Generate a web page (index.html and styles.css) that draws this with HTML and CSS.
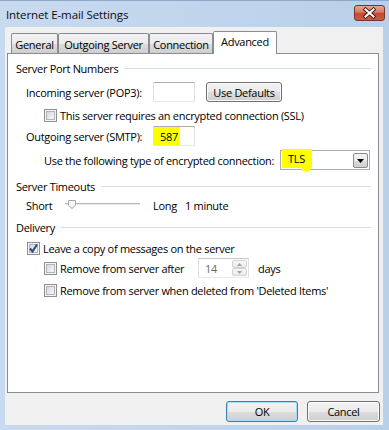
FILE: index.html
```html
<!DOCTYPE html>
<html lang="en">
<head>
    <meta charset="UTF-8">
    <title>Internet E-mail Settings</title>
    <link rel="stylesheet" href="styles.css">
</head>
<body>
    <div class="window">
        <div class="titlebar">
            <span class="title">Internet E-mail Settings</span>
            <span class="close-btn">
                <svg width="31" height="16" viewBox="0 0 31 16">
                    <path d="M11.5 4.5 L19.5 11.5 M19.5 4.5 L11.5 11.5" stroke="#4a1d16" stroke-width="4" stroke-linecap="square"/>
                    <path d="M11.5 4.5 L19.5 11.5 M19.5 4.5 L11.5 11.5" stroke="#ffffff" stroke-width="2" stroke-linecap="square"/>
                </svg>
            </span>
        </div>

        <div class="client">
            <div class="tabs">
                <div class="tab tab-general">General</div>
                <div class="tab tab-outgoing">Outgoing Server</div>
                <div class="tab tab-connection">Connection</div>
                <div class="tab tab-advanced active">Advanced</div>
            </div>

            <div class="panel">
                <div class="group-title"><span>Server Port Numbers</span></div>

                <div class="row row-incoming indent1">
                    <span class="field-label">Incoming server (POP3):</span>
                    <span class="textbox port-box"></span>
                    <button class="button defaults-btn">Use Defaults</button>
                </div>

                <div class="row row-ssl indent2">
                    <span class="check"></span>
                    <span>This server requires an encrypted connection (SSL)</span>
                </div>

                <div class="row row-outgoing indent1">
                    <span class="field-label">Outgoing server (SMTP):</span>
                    <span class="textbox port-box"><span class="marker port-marker">587</span></span>
                </div>

                <div class="row row-encrypt indent2">
                    <span class="encrypt-label">Use the following type of encrypted connection:</span>
                    <span class="combo">
                        <span class="marker tls-marker">TLS</span>
                        <span class="combo-fill"></span>
                        <span class="combo-btn">
                            <svg width="7" height="4" viewBox="0 0 7 4"><path d="M0 0 H7 L3.5 4 Z" fill="#000"/></svg>
                        </span>
                    </span>
                </div>

                <div class="group-title group-timeouts"><span>Server Timeouts</span></div>

                <div class="row row-slider indent1">
                    <span class="short-label">Short</span>
                    <span class="slider">
                        <svg width="93" height="20" viewBox="0 0 93 20">
                            <rect x="5" y="8" width="75" height="1" fill="#b9b9b9"/>
                            <rect x="5" y="9" width="75" height="1" fill="#e6e6e6"/>
                            <path d="M8.5 5.5 H15.5 V10.5 L12 13.5 L8.5 10.5 Z" fill="#f6f6f6" stroke="#a8a8a8"/>
                        </svg>
                    </span>
                    <span class="long-label">Long</span>
                    <span>1 minute</span>
                </div>

                <div class="group-title group-delivery"><span>Delivery</span></div>

                <div class="row row-leave indent-check">
                    <span class="check checked">
                        <svg width="11" height="11" viewBox="0 0 11 11">
                            <path d="M2 5.5 L4.5 8.5 L9 1.5" fill="none" stroke="#2a4a8a" stroke-width="2"/>
                        </svg>
                    </span>
                    <span>Leave a copy of messages on the server</span>
                </div>

                <div class="row row-remove-after indent2">
                    <span class="check"></span>
                    <span class="remove-label">Remove from server after</span>
                    <span class="spinner">
                        <span class="spinner-value">14</span>
                        <span class="spin-btns">
                            <span class="spin-btn">
                                <svg width="5" height="3" viewBox="0 0 5 3"><path d="M0 3 L2.5 0 L5 3 Z" fill="#a2a2a2"/></svg>
                            </span>
                            <span class="spin-btn">
                                <svg width="5" height="3" viewBox="0 0 5 3"><path d="M0 0 H5 L2.5 3 Z" fill="#a2a2a2"/></svg>
                            </span>
                        </span>
                    </span>
                    <span class="days-label">days</span>
                </div>

                <div class="row row-remove-deleted indent2">
                    <span class="check"></span>
                    <span>Remove from server when deleted from 'Deleted Items'</span>
                </div>
            </div>

            <div class="dialog-buttons">
                <button class="button ok-btn">OK</button>
                <button class="button cancel-btn">Cancel</button>
            </div>
        </div>
    </div>
</body>
</html>
```

FILE: styles.css
```css
/* Base */
* {
    margin: 0;
    padding: 0;
    box-sizing: border-box;
}

body {
    font-family: "Open Sans", "Segoe UI", sans-serif;
    font-size: 11px;
    letter-spacing: -0.3px;
    white-space: nowrap;
    color: #000000;
    background: #ffffff;
}

button {
    font: inherit;
    letter-spacing: inherit;
    color: inherit;
}

/* Window frame */
.window {
    width: 389px;
    height: 430px;
    display: flex;
    flex-direction: column;
    background: linear-gradient(to right, #c8daf0, #b9d0ea);
    border-top: 1px solid #8fa8c7;
}

.titlebar {
    height: 26px;
    display: flex;
    justify-content: space-between;
    align-items: flex-start;
    padding: 0 4px 0 6px;
}

.title {
    margin-top: 6px;
    font-size: 11.5px;
    letter-spacing: -0.1px;
    line-height: 16px;
    color: #0c0c0c;
}

.close-btn {
    margin-top: 4px;
    width: 31px;
    height: 16px;
    border: 1px solid #7a3328;
    border-radius: 3px;
    background: linear-gradient(#e5a596 0%, #d77a67 45%, #c44a34 50%, #cc5a43 100%);
    display: flex;
    align-items: center;
    justify-content: center;
}

.close-btn svg {
    margin: -1px;
}

.client {
    flex: 1;
    margin: 0 6px 5px 5px;
    background: #f0f0f0;
    padding: 4px 4px 0 2px;
    display: flex;
    flex-direction: column;
}

/* Tabs */
.tabs {
    display: flex;
    align-items: flex-end;
    height: 22px;
    padding-left: 4px;
    position: relative;
    z-index: 1;
}

.tab {
    height: 20px;
    border: 1px solid #898c95;
    border-bottom: none;
    border-radius: 2px 2px 0 0;
    background: linear-gradient(#f2f2f2 0%, #ebebeb 50%, #dddddd 51%, #cfcfcf 100%);
    display: flex;
    align-items: center;
    justify-content: center;
    padding-top: 1px;
}

.tab-general { width: 47px; }
.tab-outgoing { width: 91px; }
.tab-connection { width: 64px; }

.tab.active {
    width: 64px;
    height: 23px;
    margin-bottom: -1px;
    padding: 0 0 3px;
    background: #ffffff;
}

/* Tab page */
.panel {
    height: 340px;
    background: #ffffff;
    border: 1px solid #898c95;
    padding: 5px 7px 0 8px;
}

.group-title {
    display: flex;
    align-items: center;
    height: 18px;
}

.group-title::after {
    content: "";
    flex: 1;
    height: 1px;
    margin-left: 6px;
    background: #d5dfe5;
}

.row {
    display: flex;
    align-items: center;
    height: 20px;
}

.indent1 { padding-left: 10px; }
.indent2 { padding-left: 28px; }
.indent-check { padding-left: 11px; }

.row-incoming { margin-top: 5px; }
.row-ssl { margin-top: 3px; }
.row-outgoing { margin-top: 1px; }
.row-encrypt { margin-top: 4px; }
.group-timeouts { margin-top: 7px; }
.group-delivery { margin-top: 3px; }
.row-leave { margin-top: 2px; }
.row-remove-deleted { margin-top: 2px; }

.field-label {
    width: 127px;
}

.textbox {
    height: 20px;
    background: #ffffff;
    border: 1px solid;
    border-color: #abadb3 #dbdfe6 #e3e9ef #e2e3ea;
}

.port-box {
    width: 42px;
    display: flex;
    align-items: stretch;
}

.marker {
    background: #ffff00;
}

.port-marker {
    width: 26px;
    padding-left: 6px;
    display: flex;
    align-items: center;
}

/* Buttons */
.button {
    height: 20px;
    border: 1px solid #707070;
    border-radius: 3px;
    background: linear-gradient(#f2f2f2 0%, #ebebeb 50%, #dddddd 51%, #cfcfcf 100%);
    box-shadow: inset 0 0 0 1px #fbfbfb;
    cursor: default;
}

.defaults-btn {
    width: 76px;
    margin-left: 11px;
}

/* Checkboxes */
.check {
    width: 13px;
    height: 13px;
    margin-right: 3px;
    border: 1px solid #8e8f8f;
    background: linear-gradient(135deg, #c9cdd3 0%, #eceef0 60%, #f8f8f8 100%);
    box-shadow: inset 0 0 0 1px #f4f4f4, inset 0 0 0 2px #b2b6bc;
    flex-shrink: 0;
    display: flex;
}

/* Combo box */
.encrypt-label {
    width: 236px;
}

.combo {
    width: 90px;
    height: 20px;
    border: 1px solid #abadb3;
    background: #ffffff;
    display: flex;
    align-items: flex-start;
    padding: 0 1px;
}

.tls-marker {
    position: relative;
    width: 30px;
    height: 19px;
    margin-top: -2px;
    padding: 2px 0 0 6px;
    line-height: 16px;
}

.tls-marker::after {
    content: "";
    position: absolute;
    right: 0;
    bottom: -4px;
    width: 11px;
    height: 6px;
    background: #ffff00;
    border-radius: 0 0 6px 5px;
}

.combo-fill {
    flex: 1;
}

.combo-btn {
    width: 15px;
    height: 15px;
    margin-top: 2px;
    border: 1px solid #8a8a8a;
    border-radius: 2px;
    background: linear-gradient(#f2f2f2 0%, #ebebeb 50%, #dddddd 51%, #cfcfcf 100%);
    display: flex;
    align-items: center;
    justify-content: center;
}

/* Slider row */
.short-label { width: 34px; }
.slider { width: 93px; height: 20px; }
.long-label { width: 32px; }

/* Spinner row */
.remove-label { width: 138px; }

.spinner {
    width: 51px;
    height: 20px;
    border: 1px solid;
    border-color: #c2c5ca #dfe2e7 #e6e9ed #dfe2e7;
    background: #ffffff;
    display: flex;
    align-items: stretch;
    padding: 1px;
}

.spinner-value {
    flex: 1;
    padding-left: 5px;
    color: #6d6d6d;
    display: flex;
    align-items: center;
}

.spin-btns {
    width: 15px;
    display: flex;
    flex-direction: column;
}

.spin-btn {
    flex: 1;
    border: 1px solid #d2d2d2;
    border-radius: 2px;
    background: linear-gradient(#f7f7f7, #e9e9e9);
    display: flex;
    align-items: center;
    justify-content: center;
}

.days-label {
    margin-left: 9px;
}

/* Dialog buttons */
.dialog-buttons {
    display: flex;
    justify-content: flex-end;
    gap: 9px;
    margin-top: 8px;
    margin-right: -1px;
}

.dialog-buttons .button {
    height: 21px;
}

.ok-btn {
    width: 72px;
    border-color: #3c7fb1;
    box-shadow: inset 0 0 0 1px #a4def6;
}

.cancel-btn {
    width: 73px;
}
```
